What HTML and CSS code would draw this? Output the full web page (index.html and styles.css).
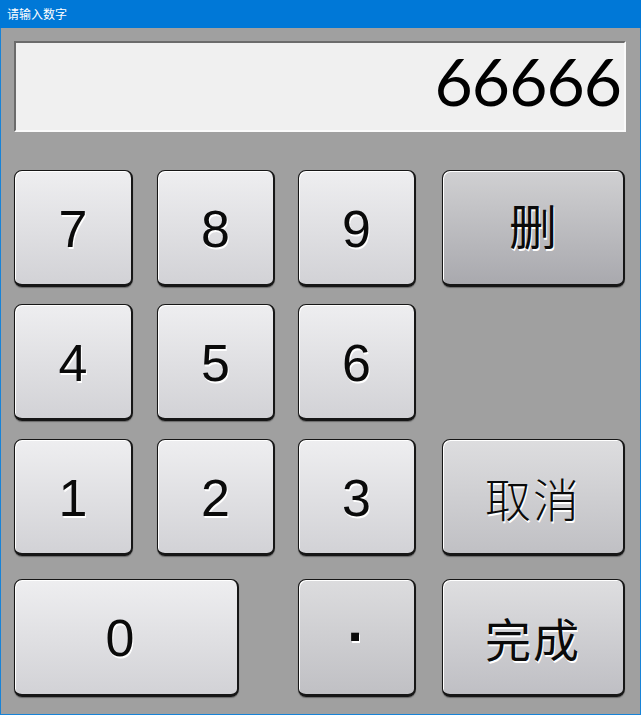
FILE: index.html
```html
<!DOCTYPE html>
<html lang="zh">
<head>
<meta charset="utf-8">
<title>请输入数字</title>
<link rel="stylesheet" href="styles.css">
</head>
<body>
<div class="window">
  <div class="titlebar">请输入数字</div>
  <div class="content">
    <div class="display">66666</div>
    <div class="keypad">
      <button class="key num r1 c1">7</button>
      <button class="key num r1 c2">8</button>
      <button class="key num r1 c3">9</button>
      <button class="key del r1 c4">删</button>
      <button class="key num r2 c1">4</button>
      <button class="key num r2 c2">5</button>
      <button class="key num r2 c3">6</button>
      <button class="key num r3 c1">1</button>
      <button class="key num r3 c2">2</button>
      <button class="key num r3 c3">3</button>
      <button class="key cancel r3 c4">取消</button>
      <button class="key num zero r4">0</button>
      <button class="key dot r4 c3">·</button>
      <button class="key done r4 c4">完成</button>
    </div>
  </div>
</div>
</body>
</html>
```

FILE: styles.css
```css
html, body {
  margin: 0;
  padding: 0;
}
body {
  width: 641px;
  height: 715px;
  overflow: hidden;
  background: #a0a0a0;
}
.window {
  box-sizing: border-box;
  width: 641px;
  height: 715px;
  border: 1px solid #1883d7;
  border-top: none;
  background: #a0a0a0;
  display: flex;
  flex-direction: column;
}
.titlebar {
  height: 28px;
  margin: 0 -1px;
  background: #0078d7;
  color: #ffffff;
  font-family: "Noto Sans CJK SC", sans-serif;
  font-size: 12px;
  line-height: 27px;
  padding-left: 7px;
}
.content {
  padding: 13px 0 0 13px;
}
.display {
  box-sizing: border-box;
  width: 612px;
  height: 91px;
  background: #f0f0f0;
  border-top: 2px solid #6b6b6b;
  border-left: 2px solid #6b6b6b;
  border-right: 2px solid #fafafa;
  border-bottom: 2px solid #fafafa;
  font-family: Lato, "Liberation Sans", sans-serif;
  font-size: 66px;
  line-height: 76px;
  text-align: right;
  padding-right: 3px;
  color: #000;
  letter-spacing: -1px;
}
.keypad {
  margin-top: 38px;
  display: grid;
  grid-template-columns: 119px 24px 118px 23px 118px 26px 183px;
  grid-template-rows: 117px 17px 117px 18px 117px 23px 118px;
}
.key {
  box-sizing: border-box;
  margin: 0;
  padding: 0;
  border: 1px solid #161616;
  border-right-width: 2px;
  border-bottom-width: 3px;
  border-radius: 8px;
  background: linear-gradient(#eeeef0, #d2d2d6);
  box-shadow: inset 1px 1px 0 #ffffff, 0 1px 1px rgba(0,0,0,0.35);
  color: #0a0a0a;
  text-shadow: 1px 2px 0 #ffffff;
  font-family: "Liberation Sans", Arial, sans-serif;
  font-size: 52px;
  line-height: 1;
  display: flex;
  align-items: center;
  justify-content: center;
  padding-top: 2px;
}
.r1 { grid-row: 1; }
.r2 { grid-row: 3; }
.r3 { grid-row: 5; }
.r4 { grid-row: 7; }
.c1 { grid-column: 1; }
.c2 { grid-column: 3; }
.c3 { grid-column: 5; }
.c4 { grid-column: 7; }
.zero {
  grid-column: 1 / 4;
  width: 225px;
  padding-right: 12px;
}
.dot {
  background: linear-gradient(#dcdcde, #c0c0c4);
  font-size: 56px;
  font-weight: bold;
  padding-bottom: 4px;
}
.del {
  background: linear-gradient(#d0d0d2, #a9a9ae);
  font-family: "Noto Sans CJK SC", sans-serif;
  font-size: 48px;
  padding-top: 0;
  padding-bottom: 8px;
}
.cancel {
  background: linear-gradient(#dddddf, #c0c0c4);
  font-family: "Noto Sans CJK SC", sans-serif;
  font-weight: 300;
  font-size: 46px;
  letter-spacing: 2px;
  padding-top: 0;
}
.done {
  background: linear-gradient(#dedee0, #bfbfc4);
  font-family: "Noto Sans CJK SC", sans-serif;
  font-size: 46px;
  letter-spacing: 2px;
  padding-top: 0;
}
```
